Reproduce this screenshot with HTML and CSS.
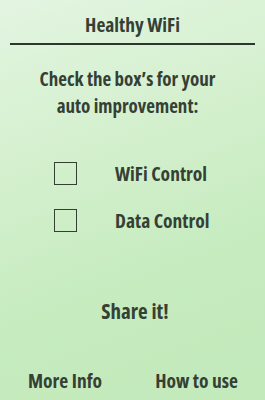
FILE: index.html
```html
<!DOCTYPE html>
<html>
<head>
<meta charset="utf-8">
<link rel="stylesheet" href="styles.css">
</head>
<body>
<div class="screen">
  <header class="header">
    <h1 class="title">Healthy WiFi</h1>
  </header>
  <p class="intro">Check the box’s for your<br>auto improvement:</p>
  <div class="options">
    <div class="option"><span class="box"></span><span class="label">WiFi Control</span></div>
    <div class="option"><span class="box"></span><span class="label">Data Control</span></div>
  </div>
  <div class="share">Share it!</div>
  <footer class="footer">
    <span class="link">More Info</span>
    <span class="link">How to use</span>
  </footer>
</div>
</body>
</html>
```
FILE: styles.css
```css
html, body {
  margin: 0;
  padding: 0;
}
body {
  width: 265px;
  height: 400px;
  overflow: hidden;
}
.screen {
  width: 265px;
  height: 400px;
  background: linear-gradient(160deg, #e3f5e1 0%, #d4f0ce 35%, #c5ebbe 70%, #c3eabb 100%);
  font-family: "Open Sans", "Roboto Condensed", sans-serif;
  font-stretch: 75%;
  font-weight: bold;
  color: #354035;
  display: flex;
  flex-direction: column;
}
.header {
  margin: 0 10px;
  padding-top: 13px;
  height: 30px;
  border-bottom: 2px solid #2f362f;
}
.title {
  margin: 0;
  font-size: 19.5px;
  line-height: 24px;
  text-align: center;
  font-weight: bold;
}
.intro {
  margin: 21px 0 0;
  padding-right: 10px;
  font-size: 19px;
  line-height: 27px;
  text-align: center;
}
.options {
  margin-top: 42px;
  display: flex;
  flex-direction: column;
  gap: 24px;
  padding-left: 54px;
}
.option {
  display: flex;
  align-items: center;
  height: 23px;
}
.box {
  box-sizing: border-box;
  width: 23px;
  height: 23px;
  border: 1.5px solid #344034;
  flex: none;
}
.label {
  margin-left: 38px;
  font-size: 19.5px;
  line-height: 24px;
}
.share {
  margin-top: 67px;
  padding-left: 5px;
  text-align: center;
  font-size: 21px;
  line-height: 24px;
}
.footer {
  margin-top: 46px;
  display: flex;
  justify-content: space-between;
  padding: 0 27px 0 28px;
  font-size: 19.5px;
  line-height: 24px;
}
```
